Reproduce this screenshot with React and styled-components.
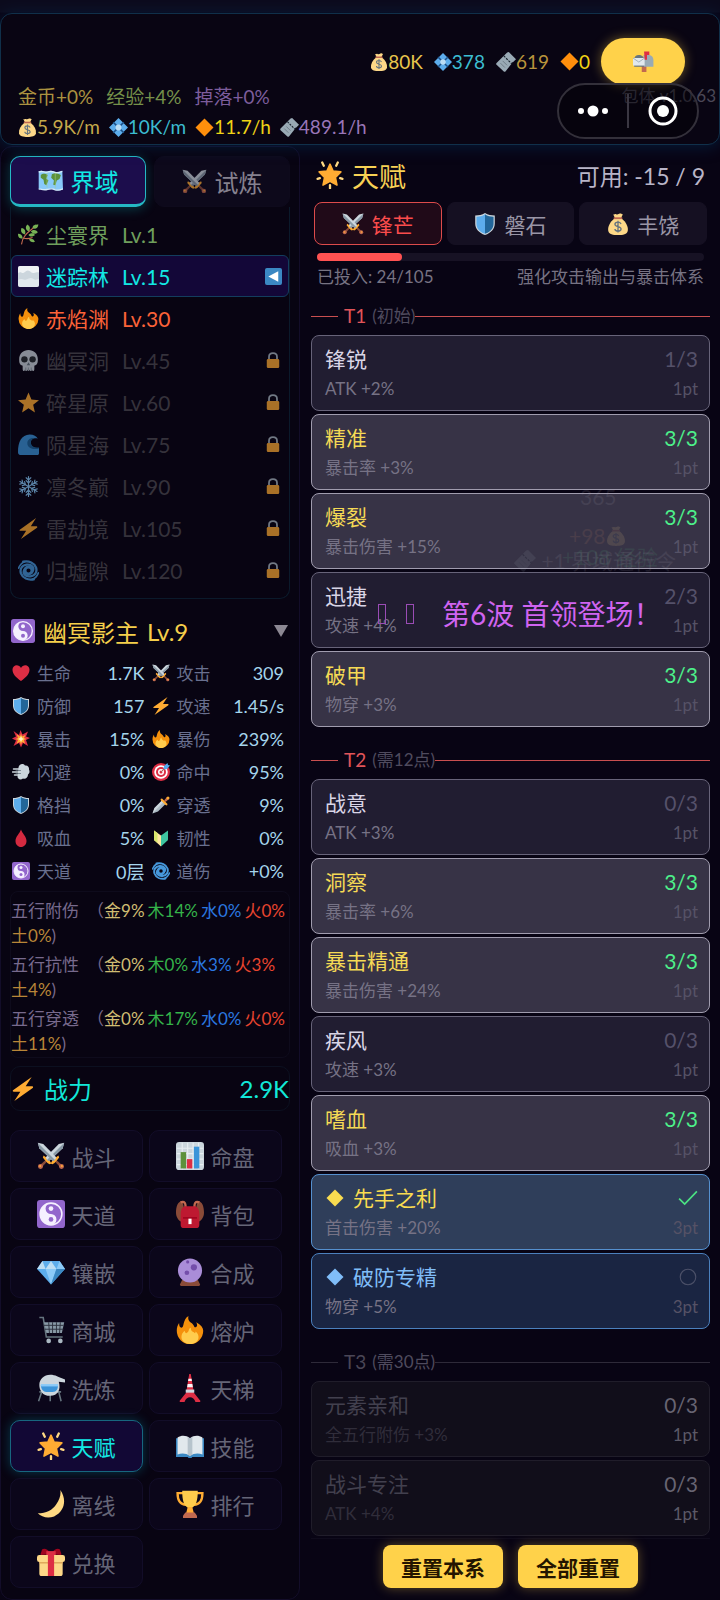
import React from 'react';
import styled, { createGlobalStyle, css } from 'styled-components';

const GlobalStyle = createGlobalStyle`
  * {
    box-sizing: border-box;
  }
  body {
    margin: 0;
    background: #080414;
    color: #b9b5c8;
    font-family: Lato, "Noto Sans CJK SC", sans-serif;
    font-size: 17px;
  }
  button {
    margin: 0;
    font-family: inherit;
    cursor: pointer;
  }
`;

const sword = (
  <>
    <path fill="#ccd6dd" d="M1 1l7 1.500L26 21l-4.500 4.500L3 8z" />
    <path fill="#8899a6" d="M1 1l22.500 22.500-2 2L3 8z" />
    <path fill="#8a4b38" d="M23 25l2-2 7 6.500-2.500 2.500z" />
    <path fill="#ffac33" d="M17.500 27.500l2-3 2.500-.5 2-2 .5-2.500 3-2 1 2.500-2 2.500-4 4.500-2.500 1.500z" />
    <circle cx="31.500" cy="31.500" r="3.200" fill="#c1694f" />
    <circle cx="32" cy="31" r="1.300" fill="#ffac33" />
  </>
);

// every drawing sits on a 36 x 36 board
const drawings = {
  money: (
    <>
      <path fill="#fdd888" d="M12 9C5 15 1 22 2 29c1 6 8 7 16 7s15-1 16-7c1-7-3-14-10-20z" />
      <path fill="#fdd888" d="M10 2c2 1 3-1 5 0s4 0 6-1 3 1 5 1l-3 6H13z" />
      <path fill="#bf6952" d="M11 7h14v3H11z" />
      <path fill="none" stroke="#67757f" strokeWidth="2.200" d="M23 18c-1-2-3-3-5-3-3 0-5 1.500-5 3.600 0 5 10 2.600 10 7.400 0 2.200-2 3.500-5 3.500s-5-1.500-5-3.500M18 12.500V32" />
    </>
  ),
  jewel: (
    <>
      <path fill="#5dadec" d="M18 0l18 18-18 18L0 18z" />
      <path stroke="#1c4f86" strokeWidth="3" fill="none" d="M8 8l20 20M28 8L8 28" />
      <circle cx="18" cy="18" r="5.500" fill="#bbddf5" />
    </>
  ),
  ticket: (
    <>
      <path fill="#99aab5" d="M23 0l13 13-6 6-8-8-1 1 8 8-12 15c-1 1-2 1-3 0L1 23c-1-1-1-2 0-3L20 1z" />
      <path fill="#99aab5" d="M20 6l10 10-3 6L14 9z" />
      <path stroke="#15202b" strokeWidth="2" strokeDasharray="4 2" d="M14 7l15 15" />
      <path stroke="#67757f" strokeWidth="1.500" d="M8 20l8 8M12 16l8 8" />
    </>
  ),
  orange: <path fill="#ff8f0c" d="M18 1l17 17-17 17L1 18z" />,
  mailbox: (
    <>
      <path fill="#c1694f" d="M15 24h8v12h-8z" />
      <path fill="#99aab5" d="M18 7h9c5 0 8 4 8 9v11H18z" />
      <path fill="#67757f" d="M2 15c0-5 3-8 8-8s9 3 9 8v12H2z" />
      <path fill="#e1e8ed" d="M0 12h20v13H0z" />
      <path fill="none" stroke="#99aab5" strokeWidth="1.500" d="M0 12l10 7 10-7" />
      <path fill="#dd2e44" d="M19 1h9v6h-4v8h-4z" />
    </>
  ),
  map: (
    <>
      <path fill="#88c9f9" d="M1 5c5-3 8 1 12 0s6-2 10 0 7 1 12-1l1 27c-5 2-8 2-12 0s-7-1-11 0-7 0-12-1z" />
      <path fill="#5c913b" d="M4 10c3-3 7-2 10 0l-2 5 3 3-3 7-3-2-1-6-4-3zM20 9l6-2 7 3-2 6-4 2-2 7-3-1 1-6-4-4z" />
      <path fill="#a6d388" d="M12 6h2v22h-2zM24 5h2v24h-2z" opacity=".4" />
      <path stroke="#d4eaf9" strokeWidth="2" fill="none" d="M1 6c5-3 8 1 12 0s6-2 10 0 7 1 12-1M1 30c5 1 8 2 12 1s7-2 11 0 7 1 12-1" />
    </>
  ),
  swords: (
    <>
      <g transform="matrix(-1 0 0 1 36 0)">{sword}</g>
      {sword}
    </>
  ),
  herb: (
    <>
      <path fill="none" stroke="#c1694f" strokeWidth="2" d="M6 35c1-12 8-19 24-31M9 24c6 2 11 1 16-1" />
      <path fill="#77b255" d="M35 1c-1 7-6 9-10 6 0-5 4-6 10-6zM16 1c5 3 6 8 2 12-5-3-6-8-2-12zM6 7c6 1 8 6 6 11-6-1-8-6-6-11zM0 17c5-1 8 3 8 8-6 0-8-3-8-8zM22 13c4-4 9-3 12 1-4 4-9 3-12-1zM18 19c3-4 9-4 11 0-3 3-8 4-11 0zM19 26c4-2 9 0 10 5-5 1-9-1-10-5z" />
    </>
  ),
  fog: (
    <>
      <rect width="36" height="36" rx="4" fill="#ccd6dd" />
      <path fill="#f0f3f5" d="M0 12c4-3 6 0 9 0s4-5 9-4 5 5 9 4 6-2 9-1V4a4 4 0 0 0-4-4H4a4 4 0 0 0-4 4z" />
      <path fill="#e1e8ed" d="M0 24c6-4 9 1 14-1s8-4 12-1 7 1 10 0v10a4 4 0 0 1-4 4H4a4 4 0 0 1-4-4z" />
    </>
  ),
  fire: (
    <>
      <path fill="#f4900c" d="M35 19a17 17 0 0 1-34 0c0-4 1-7 3-10 0 4 1 6 3 6 4 0 1-10 9-15-1 5 1 7 4 9 4 3 3 7 6 5 2-1 1-4 0-6 6 3 9 7 9 11z" />
      <path fill="#ffcc4d" d="M29 27c0 6-5 9-11 9S7 32 7 27c0-4 2-6 4-8 1 3 2 4 4 2s1-5 4-6c0 4 2 5 4 6 2 2 2 1 2-1 3 2 4 5 4 7z" />
    </>
  ),
  skull: (
    <>
      <path fill="#ccd6dd" d="M34 16C34 6 27 0 18 0S2 6 2 16c0 6 1 10 6 11v6c0 4 4 4 4 0 0 4 4 4 4 0 0 4 4 4 4 0 0 4 4 4 4 0 0 4 4 4 4 0v-6c5-1 6-5 6-11z" />
      <circle cx="11" cy="16" r="5.500" fill="#292f33" />
      <circle cx="25" cy="16" r="5.500" fill="#292f33" />
      <path fill="#66757f" d="M18 21l3 5h-6zM13 30h1v6h-1zM17 30h1v6h-1zM22 30h1v6h-1z" />
    </>
  ),
  star: <path fill="#ffac33" d="M18 1l5 12 13 1-10 8 3 13-11-7-11 7 3-13L0 14l13-1z" />,
  wave: (
    <>
      <path fill="#3b94d9" d="M0 31C0 13 6 2 20 1c7 0 12 3 14 7-8-2-13 2-12 8 1 7 7 9 14 8v9c0 2-1 3-3 3H4c-3 0-4-2-4-5z" />
      <path fill="#1c6399" d="M31 8c-8-3-15 1-15 8s7 12 20 9v-2c-7 1-13-1-14-7s4-9 9-8z" />
    </>
  ),
  snow: (
    <g fill="none" stroke="#88c9f9" strokeWidth="2" strokeLinecap="round">
      {[0, 60, 120, 180, 240, 300].map((a) => (
        <path key={a} transform={`rotate(${a} 18 18)`} d="M18 18V1M18 7l-4-4M18 7l4-4M18 12l-4-4M18 12l4-4" />
      ))}
    </g>
  ),
  zap: <path fill="#ffac33" d="M31 0L3 20c-1 1 0 2 1 2h10L5 36l27-19c2-1 1-3 0-3H22z" />,
  cyclone: (
    <g fill="none" stroke="#4799dc" strokeLinecap="round">
      <circle cx="18" cy="18" r="6" strokeWidth="5" />
      <path strokeWidth="4" d="M24 21c6-8-1-14-9-13C6 9 3 16 5 23c3 8 12 12 22 10" />
      <path strokeWidth="4" d="M12 15c-6 8 1 14 9 13 9-1 12-8 10-15C28 5 19 1 9 3" />
      <path strokeWidth="3" d="M1 14C3 9 6 5 11 3M35 22c-2 5-5 9-10 11" />
    </g>
  ),
  lock: (
    <>
      <path fill="none" stroke="#aab8c2" strokeWidth="4" d="M9 19v-8C9 0 27 0 27 11v8" />
      <rect x="4" y="16" width="28" height="20" rx="3" fill="#ffac33" />
    </>
  ),
  yinyang: (
    <>
      <rect width="36" height="36" rx="4" fill="#9266cc" />
      <circle cx="18" cy="18" r="14" fill="#9266cc" stroke="#f5f0ff" strokeWidth="2" />
      <path fill="#f5f0ff" d="M18 4a14 14 0 0 0 0 28 7 7 0 0 0 0-14 7 7 0 0 1 0-14z" />
      <circle cx="18" cy="11" r="3" fill="#f5f0ff" />
      <circle cx="18" cy="25" r="3" fill="#9266cc" />
    </>
  ),
  heart: <path fill="#dd2e44" d="M18 34C8 27 1 20 1 11 1 1 14-1 18 8c4-9 17-7 17 3 0 9-7 16-17 23z" />,
  shield: (
    <>
      <path fill="#ccd6dd" d="M18 0c5 3 10 4 16 4v13c0 9-6 15-16 19C8 32 2 26 2 17V4c6 0 11-1 16-4z" />
      <path fill="#5dadec" d="M18 2v32C8 30 4 25 4 17V6c5 0 10-1 14-4z" />
      <path fill="#226699" d="M18 2v32c10-4 14-9 14-17V6c-5 0-10-1-14-4z" />
    </>
  ),
  boom: (
    <>
      <path fill="#dd2e44" d="M3 2l11 8 3-10 4 9 11-6-4 10 8 3-8 4 4 12-10-6-4 9-4-9-11 6 5-11-8-4 8-4z" />
      <path fill="#ffac33" d="M9 8l7 5 2-6 2 6 7-3-3 6 5 2-5 2 2 7-6-3-2 6-2-6-7 3 3-7-5-2 5-2z" />
      <path fill="#fff3c4" d="M18 12l2 4 4 2-4 2-2 4-2-4-4-2 4-2z" />
    </>
  ),
  dash: (
    <>
      <path fill="#ccd6dd" d="M13 9c1-7 9-9 13-4 5-1 9 3 8 8 2 4 1 8-2 10 0 6-5 10-10 8-5 4-11 1-11-4z" />
      <path stroke="#ccd6dd" strokeWidth="3" strokeLinecap="round" d="M3 12h15M1 18h18M5 24h12" />
      <path stroke="#5d6b77" strokeWidth="1.500" strokeLinecap="round" d="M8 15h9M8 21h9" />
    </>
  ),
  target: (
    <>
      <circle cx="18" cy="18" r="18" fill="#dd2e44" />
      <circle cx="18" cy="18" r="13.500" fill="#fff" />
      <circle cx="18" cy="18" r="10" fill="#dd2e44" />
      <circle cx="18" cy="18" r="6" fill="#fff" />
      <circle cx="18" cy="18" r="3" fill="#dd2e44" />
      <path stroke="#9f6b5a" strokeWidth="2" d="M18 18L29 7" />
      <path fill="#55acee" d="M23 13l1-7 7-6 1 4 4 1-6 7z" />
    </>
  ),
  dagger: (
    <>
      <path fill="#aab8c2" d="M1 35l4-11L21 8l7 7-16 16z" />
      <path fill="#ccd6dd" d="M1 35l4-11L21 8l3 3z" />
      <path fill="#ffac33" d="M17 6l3-1 11 11-1 3-3-1L18 9z" />
      <path fill="#c1694f" d="M24 9l6-7 4 4-7 6z" />
      <circle cx="32" cy="4" r="3" fill="#ffac33" />
    </>
  ),
  drop: <path fill="#d42a40" d="M18 1c2 7 11 14 11 23 0 7-5 12-11 12S7 31 7 24c0-9 9-16 11-23z" />,
  beginner: (
    <>
      <path fill="#ffe8a0" d="M4 3l14 10v22L5 23c-1-1-1-2-1-3z" />
      <path fill="#3ec6a0" d="M32 3L18 13v22l13-12c1-1 1-2 1-3z" />
      <path fill="#d9e76c" d="M4 3l7 5v20l-6-5c-1-1-1-2-1-3z" />
    </>
  ),
  chart: (
    <>
      <rect width="36" height="36" rx="4" fill="#ccd6dd" />
      <path stroke="#e8eef2" strokeWidth="1.500" d="M8 1v34M15 1v34M22 1v34M29 1v34M1 8h34M1 15h34M1 22h34M1 29h34" />
      <path fill="#5c913b" d="M6 13h7v21H6z" />
      <path fill="#dd2e44" d="M14 22h7v12h-7z" />
      <path fill="#3b94d9" d="M23 6h7v28h-7z" />
    </>
  ),
  backpack: (
    <>
      <path fill="#8a4b38" d="M8 1C2 2 0 9 0 16c0 6 3 10 7 12l3-19zM28 1c6 1 8 8 8 15 0 6-3 10-7 12L26 9z" />
      <path fill="none" stroke="#c1694f" strokeWidth="3" d="M6 3c5-2 7 1 6 8M30 3c-5-2-7 1-6 8" />
      <path fill="#be1931" d="M11 8h14c4 2 5 6 5 11v13c0 3-2 4-4 4H10c-2 0-4-1-4-4V19c0-5 1-9 5-11z" />
      <path fill="#a0041e" d="M9 22h18v2H9z" />
      <path fill="#fff" d="M16 24h4v7h-4z" />
    </>
  ),
  gem: (
    <>
      <path fill="#5dadec" d="M7 4h22l7 10-18 20L0 14z" />
      <path fill="#bddef4" d="M7 4l4 10H0zM18 4l7 10H11z" />
      <path fill="#8ccaf7" d="M29 4l-4 10h11zM11 14h14l-7 20z" />
      <path fill="#3b88c3" d="M25 14h11L18 34z" />
    </>
  ),
  crystal: (
    <>
      <path fill="#8a4b38" d="M8 28h20l3 6c0 1-1 2-2 2H7c-1 0-2-1-2-2z" />
      <circle cx="18" cy="16" r="15.500" fill="#aa8dd8" />
      <circle cx="23" cy="12" r="4" fill="#744eaa" />
      <circle cx="14" cy="19" r="3" fill="#744eaa" />
      <circle cx="15" cy="5" r="2" fill="#744eaa" />
    </>
  ),
  cart: (
    <>
      <path fill="none" stroke="#66757f" strokeWidth="2" d="M3 2h5l4 25h21" />
      <path fill="#8899a6" d="M9 8h26l-3 14H12z" />
      <path stroke="#2b2f3c" strokeWidth="1.200" d="M9 12h25M10 17h24M15 8l1 14M20 8v14M25 8v14M30 8l-1 14" />
      <circle cx="15" cy="32" r="3" fill="#aab8c2" />
      <circle cx="30" cy="32" r="3" fill="#aab8c2" />
    </>
  ),
  alembic: (
    <>
      <path fill="none" stroke="#66757f" strokeWidth="2" d="M3 23h28M6 23L2 35M17 23v12M28 23l3 12" />
      <path fill="#ccd6dd" d="M17 1c7 0 10 3 19 6v4l-8-1c3 10-1 18-11 18C7 28 3 21 3 14S9 1 17 1z" />
      <path fill="#3b94d9" d="M5 14h22c0 5-2 9-7 9h-8c-4 0-7-4-7-9z" />
      <path fill="#88c9f9" d="M5 13h22v3H5z" />
    </>
  ),
  tower: (
    <>
      <path fill="#dd2e44" d="M17 0h2l2 12 2 12 8 10c1 1 0 2-1 2h-5c-1-4-4-6-7-6s-6 2-7 6H6c-1 0-2-1-1-2l8-10 2-12z" />
      <path fill="#f5f8fa" d="M16 6h4l.5 3h-5zM15 13h6l.7 4h-7.400z" />
      <path fill="#ccd6dd" d="M12.500 20h11v4h-11z" />
    </>
  ),
  sun: (
    <>
      <path fill="#ffac33" d="M18 4l4 9 10 1-7 7 2 10-9-5-9 5 2-10-7-7 10-1z" stroke="#ffac33" strokeWidth="2" strokeLinejoin="round" />
      <path stroke="#ffd983" strokeWidth="3" strokeLinecap="round" d="M8 2l2 4M28 2l-2 4M2 23l3-1M34 23l-3-1M18 31v4" />
    </>
  ),
  book: (
    <>
      <path fill="#3b88c3" d="M0 8h36v24H21c-1 2-5 2-6 0H0z" />
      <path fill="#e1e8ed" d="M2 7C7 4 13 4 18 8c5-4 11-4 16-1v22c-5-2-11-2-16 2-5-4-11-4-16-2z" />
      <path fill="#99aab5" d="M15 6l3 2 3-2v23l-3 2-3-2z" opacity=".6" />
    </>
  ),
  moon: <path fill="#ffd983" d="M30 0c9 13 5 28-8 34-8 3-16 1-21-4 11 0 19-4 24-12 4-6 6-12 5-18z" />,
  trophy: (
    <>
      <path fill="none" stroke="#ffac33" strokeWidth="3" d="M9 4H2c0 9 3 15 11 15M27 4h7c0 9-3 15-11 15" />
      <path fill="#ffcc4d" d="M8 1h20c0 12-2 20-8 22v7h-4v-7C10 21 8 13 8 1z" />
      <path fill="#ffac33" d="M15 22h6l2 8H13z" />
      <path fill="#c1694f" d="M12 29h12l3 4v3H9v-3z" />
    </>
  ),
  gift: (
    <>
      <path fill="#fdd888" d="M3 16h30v17c0 2-1 3-3 3H6c-2 0-3-1-3-3z" />
      <rect y="9" width="36" height="9" rx="3" fill="#fdd888" />
      <path fill="#e0a95c" d="M3 18h30v2H3z" />
      <path fill="#dd2e44" d="M14 8h8v28h-8z" />
      <path fill="#a0041e" d="M18 8C14 0 6-1 6 4c-1 3-2 4-1 5zM18 8c4-8 12-9 12-4 1 3 2 4 1 5z" />
      <path fill="#dd2e44" d="M12 4h12v5H12z" />
    </>
  ),
  back: (
    <>
      <rect width="36" height="36" rx="4" fill="#3b88c3" />
      <path fill="#fff" d="M7 18L28 7v22z" />
    </>
  ),
  tick: <path fill="none" stroke="#4be283" strokeWidth="3" d="M2 19l10 10L34 6" />,
  ring: <circle cx="18" cy="18" r="14" fill="none" stroke="#4b5068" strokeWidth="2" />,
};

const Svg = styled.svg`
  flex: none;
  width: ${(p) => p.$size}px;
  height: ${(p) => p.$size}px;
  opacity: ${(p) => (p.$dim ? 0.65 : 1)};
`;

function Icon({ name, size, dim }) {
  return <Svg viewBox="0 0 36 36" aria-hidden="true" $size={size} $dim={dim}>{drawings[name]}</Svg>;
}

const Page = styled.div`
  display: flex;
  flex-direction: column;
  min-height: 100vh;
  padding-top: 13px;
  background: linear-gradient(#0c0b1d, #0c0b1d 12px, #080414 13px);
`;

const Header = styled.header`
  position: relative;
  padding: 24px 17px 5px;
  border: 1px solid #10304a;
  border-radius: 12px;
  background: #090513;
  box-shadow: 0 2px 16px rgba(0, 60, 110, 0.4);
`;

const Wallet = styled.div`
  display: flex;
  align-items: center;
  justify-content: flex-end;
  gap: 11px;
  padding-right: 17px;
`;

const Amount = styled.span`
  display: flex;
  align-items: center;
  font-size: 19px;
  line-height: 24px;
  color: ${(p) => p.$color};
`;

const MailButton = styled.button`
  display: flex;
  align-items: center;
  justify-content: center;
  width: 84px;
  height: 47px;
  border: 0;
  border-radius: 24px;
  background: #ffd24a;
  box-shadow: 0 0 12px rgba(255, 210, 74, 0.4);
`;

const HeaderLines = styled.div`
  display: grid;
  row-gap: 6px;
`;

const HeaderLine = styled.div`
  display: flex;
  gap: ${(p) => (p.$tight ? 9 : 13)}px;
`;

const Version = styled.span`
  position: absolute;
  top: 70px;
  right: 3px;
  line-height: 24px;
  color: #4b4857;
`;

const Capsule = styled.div`
  position: absolute;
  top: 69px;
  right: 20px;
  display: flex;
  align-items: center;
  width: 142px;
  height: 56px;
  border: 2px solid #33303a;
  border-radius: 28px;
  background: rgba(4, 2, 8, 0.5);
`;

const CapsuleButton = styled.button`
  display: flex;
  flex: 1;
  align-items: center;
  justify-content: center;
  height: 34px;
  padding: 0;
  border: 0;
  background: none;
  & + & {
    border-left: 2px solid #3a3742;
  }
`;

const Columns = styled.div`
  display: grid;
  flex: 1;
  grid-template-columns: minmax(0, 5fr) minmax(0, 7fr);
  margin-top: 1px;
`;

const Side = styled.aside`
  display: flex;
  flex-direction: column;
  padding: 9px 9px 11px;
  border: 1px solid #130d29;
  border-radius: 12px;
  background: #080412;
`;

const SideTabs = styled.div`
  display: grid;
  grid-template-columns: 1fr 1fr;
  gap: 8px;
`;

const SideTab = styled.button`
  display: flex;
  align-items: center;
  justify-content: center;
  gap: 8px;
  height: 51px;
  border: 1px solid ${(p) => (p.$active ? '#25b8c4' : '#0e0a1c')};
  border-bottom-width: ${(p) => (p.$active ? '3px' : '1px')};
  border-radius: 10px;
  background: ${(p) => (p.$active ? '#1c0d4c' : '#0d091b')};
  box-shadow: ${(p) => (p.$active ? '0 2px 12px rgba(0, 229, 229, 0.25)' : 'none')};
  color: ${(p) => (p.$active ? '#12e8e4' : '#85818f')};
  font-size: 24px;
`;

const RealmList = styled.ul`
  margin: 0;
  padding: 6px 0 7px;
  border: 1px solid #0b1a2b;
  border-top: 0;
  border-radius: 0 0 10px 10px;
  list-style: none;
`;

const Realm = styled.button`
  display: flex;
  align-items: center;
  width: 100%;
  height: 42px;
  padding: 0 6px;
  border: 1px solid ${(p) => (p.$active ? '#133d5e' : 'transparent')};
  border-radius: 6px;
  background: ${(p) => (p.$active ? '#130738' : 'none')};
  color: ${(p) => p.$color};
  font-size: 21px;
`;

const RealmName = styled.span`
  margin: 0 13px 0 7px;
`;

const RealmMark = styled.span`
  display: flex;
  justify-content: center;
  width: 18px;
  margin-left: auto;
`;

const Hero = styled.div`
  display: flex;
  align-items: center;
  gap: 8px;
  height: 32px;
  margin: 16px 2px 9px 1px;
  color: #f5cf4b;
  font-size: 24px;
`;

const Fold = styled.button`
  width: 0;
  height: 0;
  margin-left: auto;
  padding: 0;
  border: 7px solid transparent;
  border-top: 12px solid #8c8893;
  border-bottom: 0;
  background: none;
`;

const Stats = styled.dl`
  display: grid;
  grid-template-columns: 1fr 1fr;
  column-gap: 7px;
  margin: 0 6px 0 2px;
`;

const Stat = styled.div`
  display: flex;
  align-items: center;
  gap: 7px;
  height: 33px;
  dt {
    color: #69708f;
  }
  dd {
    margin: 0 0 0 auto;
    font-size: 18px;
    color: #a5d5ec;
  }
`;

const Elements = styled.div`
  margin-top: 4px;
  padding: 6px 0 1px;
  border: 1px solid #0e0b1c;
  border-radius: 8px;
  p {
    margin: 0 0 4px;
    line-height: 25px;
    white-space: nowrap;
    color: #776a8d;
  }
  p:last-child {
    margin: 0;
  }
`;

const Tint = styled.span`
  margin-right: 3px;
  color: ${(p) => p.$color};
  &:last-child {
    margin-right: 0;
  }
`;

const Open = styled.span`
  margin-left: 8px;
`;

const Power = styled.div`
  display: flex;
  align-items: center;
  gap: 9px;
  height: 45px;
  margin: 8px 0 19px;
  border: 1px solid #0c1020;
  border-radius: 10px;
  color: #12e8d8;
  font-size: 24px;
  strong {
    margin-left: auto;
    font-weight: 400;
  }
`;

const Nav = styled.nav`
  display: grid;
  flex: 1;
  grid-template-columns: 1fr 1fr;
  grid-auto-rows: 1fr;
  gap: 6px;
  margin-right: 8px;
`;

const NavButton = styled.button`
  display: flex;
  align-items: center;
  justify-content: center;
  gap: 6px;
  padding: 0;
  border: 1px solid ${(p) => (p.$active ? '#17667f' : '#120d28')};
  border-radius: 10px;
  background: ${(p) => (p.$active ? '#120835' : '#0b061a')};
  box-shadow: ${(p) => (p.$active ? '0 0 12px rgba(0, 180, 210, 0.3)' : 'none')};
  color: ${(p) => (p.$active ? '#12e8e4' : '#656577')};
  font-size: 22px;
`;

const Main = styled.main`
  position: relative;
  display: flex;
  flex-direction: column;
  padding: 9px 10px 10px 11px;
`;

const TitleRow = styled.div`
  display: flex;
  align-items: center;
  justify-content: space-between;
  height: 40px;
  padding: 0 5px;
  font-size: 23px;
`;

const Title = styled.h1`
  display: flex;
  align-items: center;
  gap: 8px;
  margin: 0;
  color: #f7d154;
  font-size: 27px;
  font-weight: 400;
`;

const Branches = styled.div`
  display: grid;
  grid-template-columns: 1fr 1fr 1fr;
  gap: 5px;
  margin: 7px 3px 8px;
`;

const Branch = styled.button`
  display: flex;
  align-items: center;
  justify-content: center;
  gap: 8px;
  height: 43px;
  border: 1px solid ${(p) => (p.$active ? '#dd4b4b' : '#151022')};
  border-radius: 8px;
  background: ${(p) => (p.$active ? '#200a18' : '#151022')};
  color: ${(p) => (p.$active ? '#fb4c4c' : '#9a96a6')};
  font-size: 21px;
`;

const Track = styled.div`
  height: 8px;
  margin: 0 6px;
  border-radius: 4px;
  background: #171224;
`;

const Fill = styled.div`
  height: 8px;
  border-radius: 4px;
  background: #ff5252;
`;

const Caption = styled.div`
  display: flex;
  justify-content: space-between;
  margin: 4px 6px 14px;
  line-height: 24px;
  color: #777383;
`;

const TierHead = styled.h2`
  display: flex;
  align-items: center;
  margin: 0 0 6px;
  color: ${(p) => (p.$locked ? '#4a4656' : '#e0555a')};
  font-size: 19px;
  font-weight: 400;
  line-height: 26px;
  &::before,
  &::after {
    content: '';
    height: 1px;
    background: ${(p) => (p.$locked ? '#2e2a39' : '#c94f50')};
  }
  &::before {
    width: 27px;
    margin-right: 6px;
  }
  &::after {
    flex: 1;
  }
  small {
    margin-left: 6px;
    color: #4f4b5e;
    font-size: 17px;
  }
`;

const Tier = styled.section`
  display: flex;
  flex-direction: column;
  gap: 3px;
  margin-bottom: 20px;
  &:last-of-type {
    margin-bottom: 2px;
  }
`;

const looks = {
  open: ['#211d31', '#676379', '#d9d5e6', '#55516a'],
  full: ['#373346', '#a09cae', '#f5da55', '#4df08a'],
  keyFull: ['#2f3e5a', '#5590cf', '#f9dc50', '#4df08a'],
  key: ['#1a2542', '#4b80bd', '#80bdf8', '#4b5068'],
  locked: ['#110e1a', '#201d2a', '#42404e', '#676472'],
};

const Card = styled.button`
  display: grid;
  grid-template-columns: 1fr auto;
  align-items: center;
  row-gap: 4px;
  padding: 9px 11px 9px 13px;
  border: 1px solid;
  border-radius: 8px;
  text-align: left;
  ${({ $look }) => css`
    background: ${looks[$look][0]};
    border-color: ${looks[$look][1]};
    color: ${looks[$look][2]};
  `}
`;

const CardName = styled.span`
  display: flex;
  align-items: center;
  font-size: 21px;
  line-height: 28px;
`;

const Rhombus = styled.span`
  width: 12px;
  height: 12px;
  margin: 0 12px 0 4px;
  background: currentColor;
  transform: rotate(45deg);
`;

const CardCount = styled.span`
  justify-self: end;
  display: flex;
  color: ${(p) => looks[p.$look][3]};
  font-size: 21px;
  line-height: 28px;
`;

const CardNote = styled.span`
  color: ${(p) => (p.$look === 'locked' ? '#302d3a' : '#767285')};
  font-size: 17px;
  line-height: 24px;
`;

const CardCost = styled.span`
  color: ${(p) => (p.$look === 'locked' ? '#5c5967' : '#565266')};
  font-size: 17px;
  line-height: 24px;
  justify-self: end;
`;

const Footer = styled.footer`
  display: flex;
  justify-content: center;
  gap: 15px;
  padding-top: 6px;
  border-top: 1px solid #0f0b1c;
`;

const ResetButton = styled.button`
  width: 120px;
  height: 43px;
  padding: 0;
  border: 0;
  border-radius: 8px;
  background: #ffd24a;
  box-shadow: 0 0 12px rgba(255, 210, 74, 0.35);
  color: #241500;
  font-size: 21px;
  font-weight: 700;
`;

const Banner = styled.div`
  position: absolute;
  top: 448px;
  left: 78px;
  display: flex;
  align-items: center;
  gap: 20px;
  color: #d064f0;
  font-size: 28px;
  line-height: 40px;
  white-space: nowrap;
  pointer-events: none;
`;

const Tofu = styled.span`
  width: 8px;
  height: 20px;
  border: 1px solid #9a4cb5;
`;

const BannerText = styled.span`
  margin-left: 8px;
`;

const Floating = styled.span`
  position: absolute;
  top: ${(p) => p.$top}px;
  left: ${(p) => p.$left}px;
  display: flex;
  align-items: center;
  color: ${(p) => p.$color};
  font-size: 21px;
  line-height: 24px;
  white-space: nowrap;
  opacity: 0.12;
  pointer-events: none;
`;

const realms = [
  ['herb', '尘寰界', 1, '#6f9f5c'],
  ['fog', '迷踪林', 15, '#12e8e4', 'back'],
  ['fire', '赤焰渊', 30, '#fb6238'],
  ['skull', '幽冥洞', 45],
  ['star', '碎星原', 60],
  ['wave', '陨星海', 75],
  ['snow', '凛冬巅', 90],
  ['zap', '雷劫境', 105],
  ['cyclone', '归墟隙', 120],
];

const stats = [
  ['heart', '生命', '1.7K'], ['swords', '攻击', '309'],
  ['shield', '防御', '157'], ['zap', '攻速', '1.45/s'],
  ['boom', '暴击', '15%'], ['fire', '暴伤', '239%'],
  ['dash', '闪避', '0%'], ['target', '命中', '95%'],
  ['shield', '格挡', '0%'], ['dagger', '穿透', '9%'],
  ['drop', '吸血', '5%'], ['beginner', '韧性', '0%'],
  ['yinyang', '天道', '0层'], ['cyclone', '道伤', '+0%'],
];

const elements = [
  ['五行附伤', [9, 14, 0, 0, 0]],
  ['五行抗性', [0, 0, 3, 3, 4]],
  ['五行穿透', [0, 17, 0, 0, 11]],
];

const nav = [
  ['swords', '战斗'], ['chart', '命盘'],
  ['yinyang', '天道'], ['backpack', '背包'],
  ['gem', '镶嵌'], ['crystal', '合成'],
  ['cart', '商城'], ['fire', '熔炉'],
  ['alembic', '洗炼'], ['tower', '天梯'],
  ['sun', '天赋'], ['book', '技能'],
  ['moon', '离线'], ['trophy', '排行'],
  ['gift', '兑换'],
];

const tiers = [
  {
    name: 'T1',
    need: '(初始)',
    talents: [
      ['锋锐', 'ATK +2%', '1/3', 'open'],
      ['精准', '暴击率 +3%', '3/3', 'full'],
      ['爆裂', '暴击伤害 +15%', '3/3', 'full'],
      ['迅捷', '攻速 +4%', '2/3', 'open'],
      ['破甲', '物穿 +3%', '3/3', 'full'],
    ],
  },
  {
    name: 'T2',
    need: '(需12点)',
    talents: [
      ['战意', 'ATK +3%', '0/3', 'open'],
      ['洞察', '暴击率 +6%', '3/3', 'full'],
      ['暴击精通', '暴击伤害 +24%', '3/3', 'full'],
      ['疾风', '攻速 +3%', '0/3', 'open'],
      ['嗜血', '吸血 +3%', '3/3', 'full'],
      ['先手之利', '首击伤害 +20%', '', 'keyFull'],
      ['破防专精', '物穿 +5%', '', 'key'],
    ],
  },
  {
    name: 'T3',
    need: '(需30点)',
    locked: true,
    talents: [
      ['元素亲和', '全五行附伤 +3%', '0/3', 'locked'],
      ['战斗专注', 'ATK +4%', '0/3', 'locked'],
    ],
  },
];

function Talent({ talent }) {
  const [name, note, count, look] = talent;
  const isKey = look === 'key' || look === 'keyFull';
  return (
    <Card type="button" $look={look}>
      <CardName>{isKey && <Rhombus />}{name}</CardName>
      <CardCount $look={look}>
        {isKey ? <Icon name={look === 'key' ? 'ring' : 'tick'} size={20} /> : count}
      </CardCount>
      <CardNote $look={look}>{note}</CardNote>
      <CardCost $look={look}>{isKey ? '3pt' : '1pt'}</CardCost>
    </Card>
  );
}

function TopBar() {
  return (
    <Header>
      <Wallet>
        <Amount $color="#e8c64c"><Icon name="money" size={18} />80K</Amount>
        <Amount $color="#3cbcd0"><Icon name="jewel" size={18} />378</Amount>
        <Amount $color="#b9953c"><Icon name="ticket" size={20} />619</Amount>
        <Amount $color="#f2d413"><Icon name="orange" size={19} />0</Amount>
        <MailButton type="button" aria-label="邮件"><Icon name="mailbox" size={21} /></MailButton>
      </Wallet>
      <HeaderLines>
        <HeaderLine>
          <Amount $color="#ab9240">金币+0%</Amount>
          <Amount $color="#76914a">经验+4%</Amount>
          <Amount $color="#7d5d9c">掉落+0%</Amount>
        </HeaderLine>
        <HeaderLine $tight>
          <Amount $color="#c5a94a"><Icon name="money" size={19} />5.9K/m</Amount>
          <Amount $color="#3cbcd0"><Icon name="jewel" size={19} />10K/m</Amount>
          <Amount $color="#f0d416"><Icon name="orange" size={19} />11.7/h</Amount>
          <Amount $color="#9a76b8"><Icon name="ticket" size={19} />489.1/h</Amount>
        </HeaderLine>
      </HeaderLines>
      <Version>包体 v1.0.63</Version>
      <Capsule>
        <CapsuleButton type="button" aria-label="更多">
          <svg width="30" height="12" viewBox="0 0 30 12" fill="#fff">
            <circle cx="3" cy="6" r="3" />
            <circle cx="15" cy="6" r="5.500" />
            <circle cx="27" cy="6" r="3" />
          </svg>
        </CapsuleButton>
        <CapsuleButton type="button" aria-label="关闭">
          <svg width="30" height="30" viewBox="0 0 30 30" fill="#fff">
            <circle cx="15" cy="15" r="13" fill="none" stroke="#fff" strokeWidth="3" />
            <circle cx="15" cy="15" r="6" />
          </svg>
        </CapsuleButton>
      </Capsule>
    </Header>
  );
}

function Sidebar() {
  return (
    <Side>
      <SideTabs>
        <SideTab type="button" $active><Icon name="map" size={25} />界域</SideTab>
        <SideTab type="button"><Icon name="swords" size={25} dim />试炼</SideTab>
      </SideTabs>
      <RealmList>
        {realms.map(([icon, name, level, color, mark]) => (
          <li key={name}>
            <Realm type="button" $active={mark === 'back'} $color={color || '#35323b'}>
              <Icon name={icon} size={21} dim={!color} />
              <RealmName>{name}</RealmName>
              Lv.{level}
              <RealmMark>
                {mark && <Icon name={mark} size={17} />}
                {!color && <Icon name="lock" size={16} dim />}
              </RealmMark>
            </Realm>
          </li>
        ))}
      </RealmList>
      <Hero>
        <Icon name="yinyang" size={24} />
        <span>幽冥影主</span>
        <span>Lv.9</span>
        <Fold type="button" aria-label="收起" />
      </Hero>
      <Stats>
        {stats.map(([icon, name, value]) => (
          <Stat key={name}>
            <Icon name={icon} size={18} />
            <dt>{name}</dt>
            <dd>{value}</dd>
          </Stat>
        ))}
      </Stats>
      <Elements>
        {elements.map(([name, v]) => (
          <p key={name}>
            {name}<Open>（</Open>
            <Tint $color="#d0bd72">金{v[0]}%</Tint>
            <Tint $color="#35b34a">木{v[1]}%</Tint>
            <Tint $color="#2b78e0">水{v[2]}%</Tint>
            <Tint $color="#e8452f">火{v[3]}%</Tint>
            <br />
            <Tint $color="#b98638">土{v[4]}%</Tint>)
          </p>
        ))}
      </Elements>
      <Power><Icon name="zap" size={24} />战力<strong>2.9K</strong></Power>
      <Nav>
        {nav.map(([icon, name]) => (
          <NavButton key={name} type="button" $active={name === '天赋'}>
            <Icon name={icon} size={28} />{name}
          </NavButton>
        ))}
      </Nav>
    </Side>
  );
}

function Talents() {
  return (
    <Main>
      <TitleRow>
        <Title><Icon name="sun" size={28} />天赋</Title>
        <span>可用: -15 / 9</span>
      </TitleRow>
      <Branches>
        <Branch type="button" $active><Icon name="swords" size={22} />锋芒</Branch>
        <Branch type="button"><Icon name="shield" size={22} />磐石</Branch>
        <Branch type="button"><Icon name="money" size={22} />丰饶</Branch>
      </Branches>
      <Track><Fill style={{ width: `${Math.floor((24 / 105) * 100)}%` }} /></Track>
      <Caption><span>已投入: 24/105</span><span>强化攻击输出与暴击体系</span></Caption>
      {tiers.map((tier) => (
        <React.Fragment key={tier.name}>
          <TierHead $locked={tier.locked}>{tier.name}<small>{tier.need}</small></TierHead>
          <Tier>
            {tier.talents.map((t) => <Talent key={t[0]} talent={t} />)}
          </Tier>
        </React.Fragment>
      ))}
      <Footer>
        <ResetButton type="button">重置本系</ResetButton>
        <ResetButton type="button">全部重置</ResetButton>
      </Footer>
      <Floating $top={339} $left={280} $color="#a8a4b4">365</Floating>
      <Floating $top={378} $left={269} $color="#c98a6a">+98<Icon name="money" size={20} /></Floating>
      <Floating $top={399} $left={262} $color="#4fae7a">+108 经验</Floating>
      <Floating $top={403} $left={214} $color="#a8a4b4"><Icon name="ticket" size={22} />&nbsp;+1 界域通行令</Floating>
      <Banner><Tofu /><Tofu /><BannerText>第6波 首领登场！</BannerText></Banner>
    </Main>
  );
}

export default function App() {
  return (
    <>
      <GlobalStyle />
      <Page>
        <TopBar />
        <Columns>
          <Sidebar />
          <Talents />
        </Columns>
      </Page>
    </>
  );
}
